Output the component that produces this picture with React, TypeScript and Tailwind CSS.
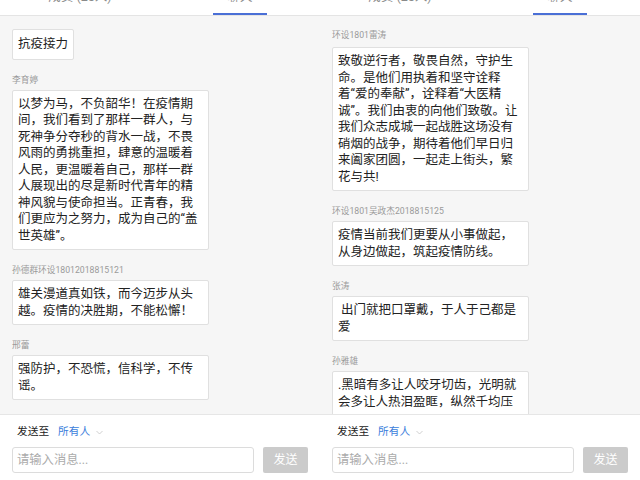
type Msg = { name?: string; lines: string[]; fit?: boolean };

const left: Msg[] = [
  { lines: ["抗疫接力"], fit: true },
  {
    name: "李育婷",
    lines: [
      "以梦为马，不负韶华！在疫情期",
      "间，我们看到了那样一群人，与",
      "死神争分夺秒的背水一战，不畏",
      "风雨的勇挑重担，肆意的温暖着",
      "人民，更温暖着自己，那样一群",
      "人展现出的尽是新时代青年的精",
      "神风貌与使命担当。正青春，我",
      "们更应为之努力，成为自己的“盖",
      "世英雄”。",
    ],
  },
  {
    name: "孙德群环设18012018815121",
    lines: ["雄关漫道真如铁，而今迈步从头", "越。疫情的决胜期，不能松懈！"],
  },
  { name: "邢蕾", lines: ["强防护，不恐慌，信科学，不传", "谣。"] },
];

const right: Msg[] = [
  {
    name: "环设1801雷涛",
    lines: [
      "致敬逆行者，敬畏自然，守护生",
      "命。是他们用执着和坚守诠释",
      "着“爱的奉献”，诠释着“大医精",
      "诚”。我们由衷的向他们致敬。让",
      "我们众志成城一起战胜这场没有",
      "硝烟的战争，期待着他们早日归",
      "来阖家团圆，一起走上街头，繁",
      "花与共!",
    ],
  },
  {
    name: "环设1801吴政杰2018815125",
    lines: ["疫情当前我们更要从小事做起，", "从身边做起，筑起疫情防线。"],
  },
  { name: "张涛", lines: [" 出门就把口罩戴，于人于己都是", "爱"] },
  {
    name: "孙雅雄",
    lines: [".黑暗有多让人咬牙切齿，光明就", "会多让人热泪盈眶，纵然千均压"],
  },
];

function Bubble({ msg, first }: { msg: Msg; first: boolean }) {
  return (
    <div>
      {msg.name && (
        <div
          className={`${first ? "mt-[1px] mb-[7px]" : "mt-[15px] mb-[5px]"} text-[8.7px] leading-[10px] text-[#9a9a9a]`}
        >
          {msg.name}
        </div>
      )}
      <div
        className={`${msg.fit ? "w-fit py-[6px] pr-[5px]" : "w-[197px] py-[5px]"} rounded-[2px] border border-[#e0e0e0] bg-white pl-[5px] text-[12.5px] leading-[16.5px] text-[#222]`}
      >
        {msg.lines.map((l, i) => (
          <div key={i} className="whitespace-pre">
            {l}
          </div>
        ))}
      </div>
    </div>
  );
}

function Panel({ msgs }: { msgs: Msg[] }) {
  return (
    <div className="flex h-[480px] w-[320px] flex-col bg-[#f6f6f6]">
      <div className="flex h-[16px] shrink-0 overflow-hidden border-b border-[#e4e4e4] bg-white">
        <div className="flex w-[160px] justify-center">
          <span className="-mt-[9px] text-[12.5px] leading-[12.5px] text-[#8a8a8a]">成员 (25人)</span>
        </div>
        <div className="flex w-[160px] flex-col items-center">
          <span className="-mt-[9px] text-[12.5px] leading-[12.5px] text-[#8a8a8a]">聊天</span>
          <div className="mt-auto h-[2px] w-[54px] bg-[#4a6fd6]" />
        </div>
      </div>
      <div className="flex-1 overflow-hidden px-[12px] pt-[13px]">
        {msgs.map((m, i) => (
          <div key={i} className={i > 0 && !m.name ? "mt-[15px]" : ""}>
            <Bubble msg={m} first={i === 0} />
          </div>
        ))}
      </div>
      <div className="h-[66px] shrink-0 border-t border-[#e6e6e6] bg-white pt-[10px]">
        <div className="flex h-[14px] items-center pl-[17px] text-[10.7px] leading-[14px]">
          <span className="text-[#222]">发送至</span>
          <span className="ml-[9px] text-[#3b7ddb]">所有人</span>
          <svg className="ml-[6px]" width="7" height="5" viewBox="0 0 7 5">
            <path d="M0.5 1 L3.5 4 L6.5 1" fill="none" stroke="#c4c4c4" strokeWidth="0.8" />
          </svg>
        </div>
        <div className="mt-[8px] flex items-center px-[12px]">
          <div className="flex h-[26px] w-[242px] items-center rounded-[3px] border border-[#dcdcdc] bg-white pl-[4px] text-[12.3px] text-[#ababab]">
            请输入消息...
          </div>
          <div className="ml-[9px] flex h-[26px] w-[45px] items-center justify-center rounded-[2px] bg-[#cbcbcb] text-[12px] text-white">
            发送
          </div>
        </div>
      </div>
    </div>
  );
}

export default function App() {
  return (
    <div className="flex h-[480px] w-[640px] overflow-hidden font-[Roboto,'Noto_Sans_CJK_SC',sans-serif]">
      <Panel msgs={left} />
      <Panel msgs={right} />
    </div>
  );
}
